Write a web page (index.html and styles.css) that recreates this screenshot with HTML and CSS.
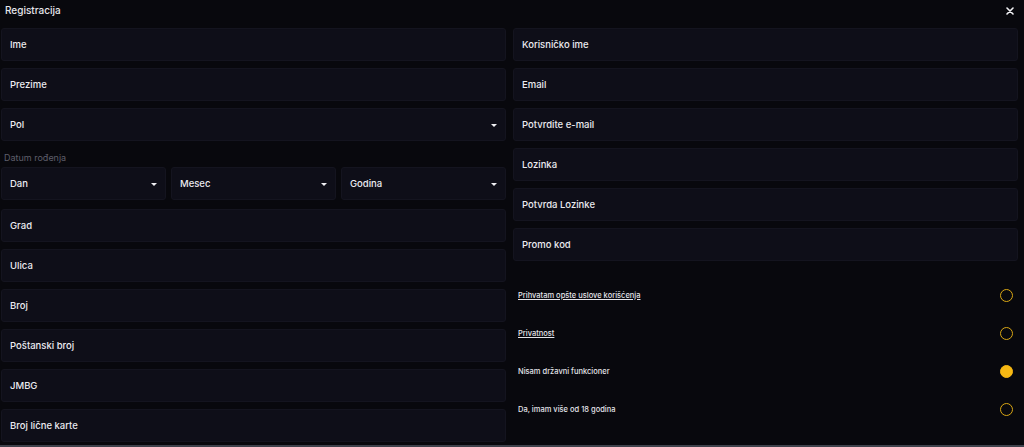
FILE: index.html
```html
<!DOCTYPE html>
<html lang="sr">
<head>
<meta charset="utf-8">
<title>Registracija</title>
<link rel="stylesheet" href="styles.css">
</head>
<body>
<div class="modal">
  <header class="head">
    <span class="title">Registracija</span>
    <svg class="close" width="8" height="8" viewBox="0 0 8 8"><path d="M1 1L7 7M7 1L1 7" stroke="#f2f2f5" stroke-width="1.6" stroke-linecap="round"/></svg>
  </header>
  <div class="cols">
    <div class="col">
      <div class="field">Ime</div>
      <div class="field">Prezime</div>
      <div class="field select">Pol<span class="caret"></span></div>
      <div class="date">
        <div class="label">Datum rođenja</div>
        <div class="date-row">
          <div class="field select">Dan<span class="caret"></span></div>
          <div class="field select">Mesec<span class="caret"></span></div>
          <div class="field select">Godina<span class="caret"></span></div>
        </div>
      </div>
      <div class="field">Grad</div>
      <div class="field">Ulica</div>
      <div class="field">Broj</div>
      <div class="field">Poštanski broj</div>
      <div class="field">JMBG</div>
      <div class="field">Broj lične karte</div>
    </div>
    <div class="col">
      <div class="field">Korisničko ime</div>
      <div class="field">Email</div>
      <div class="field">Potvrdite e-mail</div>
      <div class="field">Lozinka</div>
      <div class="field">Potvrda Lozinke</div>
      <div class="field">Promo kod</div>
      <div class="checks">
        <div class="check"><span class="link">Prihvatam opšte uslove korišćenja</span><span class="radio"></span></div>
        <div class="check"><span class="link">Privatnost</span><span class="radio"></span></div>
        <div class="check"><span>Nisam državni funkcioner</span><span class="radio on"></span></div>
        <div class="check"><span>Da, imam više od 18 godina</span><span class="radio"></span></div>
      </div>
    </div>
  </div>
</div>
</body>
</html>
```
FILE: styles.css
```css
html, body {
  margin: 0;
  padding: 0;
  background: #08080d;
  height: 100%;
}
body {
  font-family: "Inter", "Noto Sans", sans-serif;
  color: #ebebf0;
  font-weight: 500;
  overflow: hidden;
}
.modal {
  width: 1024px;
  height: 447px;
  box-sizing: border-box;
  border-bottom: 2px solid #3f424c;
  overflow: hidden;
}
.head {
  height: 28px;
  display: flex;
  align-items: center;
  justify-content: space-between;
  padding: 0 10px 9px 5px;
  box-sizing: border-box;
}
.title {
  font-size: 10px;
  font-weight: 500;
  color: #e6e6ec;
}
.close {
  display: block;
  margin-top: 2px;
}
.cols {
  display: grid;
  grid-template-columns: 505px 505px;
  column-gap: 7px;
  padding-left: 1px;
}
.col {
  display: flex;
  flex-direction: column;
  gap: 7px;
}
.field {
  height: 33px;
  box-sizing: border-box;
  background: #0e0e18;
  border: 1px solid #14141f;
  border-radius: 3px;
  display: flex;
  align-items: center;
  padding-left: 8px;
  padding-bottom: 1px;
  font-size: 9.5px;
  position: relative;
}
.select {
  justify-content: space-between;
  padding-right: 8px;
}
.caret {
  width: 0;
  height: 0;
  border-left: 3px solid transparent;
  border-right: 3px solid transparent;
  border-top: 3.5px solid #f0f0f4;
  margin-top: 3px;
}
.date {
  display: flex;
  flex-direction: column;
  margin-bottom: 2px;
}
.label {
  height: 19px;
  display: flex;
  align-items: center;
  padding-left: 3px;
  padding-bottom: 1px;
  box-sizing: border-box;
  font-size: 9px;
  font-weight: 400;
  color: #5f5f6b;
}
.date-row {
  display: grid;
  grid-template-columns: 1fr 1fr 1fr;
  column-gap: 5px;
}
.checks {
  display: flex;
  flex-direction: column;
  padding-top: 8px;
}
.check {
  height: 38px;
  display: flex;
  align-items: center;
  justify-content: space-between;
  padding: 0 5px 0 5px;
  font-size: 7.5px;
  color: #e4e4ea;
}
.link {
  text-decoration: underline;
  text-underline-offset: 1px;
}
.radio {
  width: 13px;
  height: 13px;
  box-sizing: border-box;
  border: 1.5px solid #d9a614;
  border-radius: 50%;
}
.radio.on {
  background: #f7b813;
  border-color: #f7b813;
}
```
